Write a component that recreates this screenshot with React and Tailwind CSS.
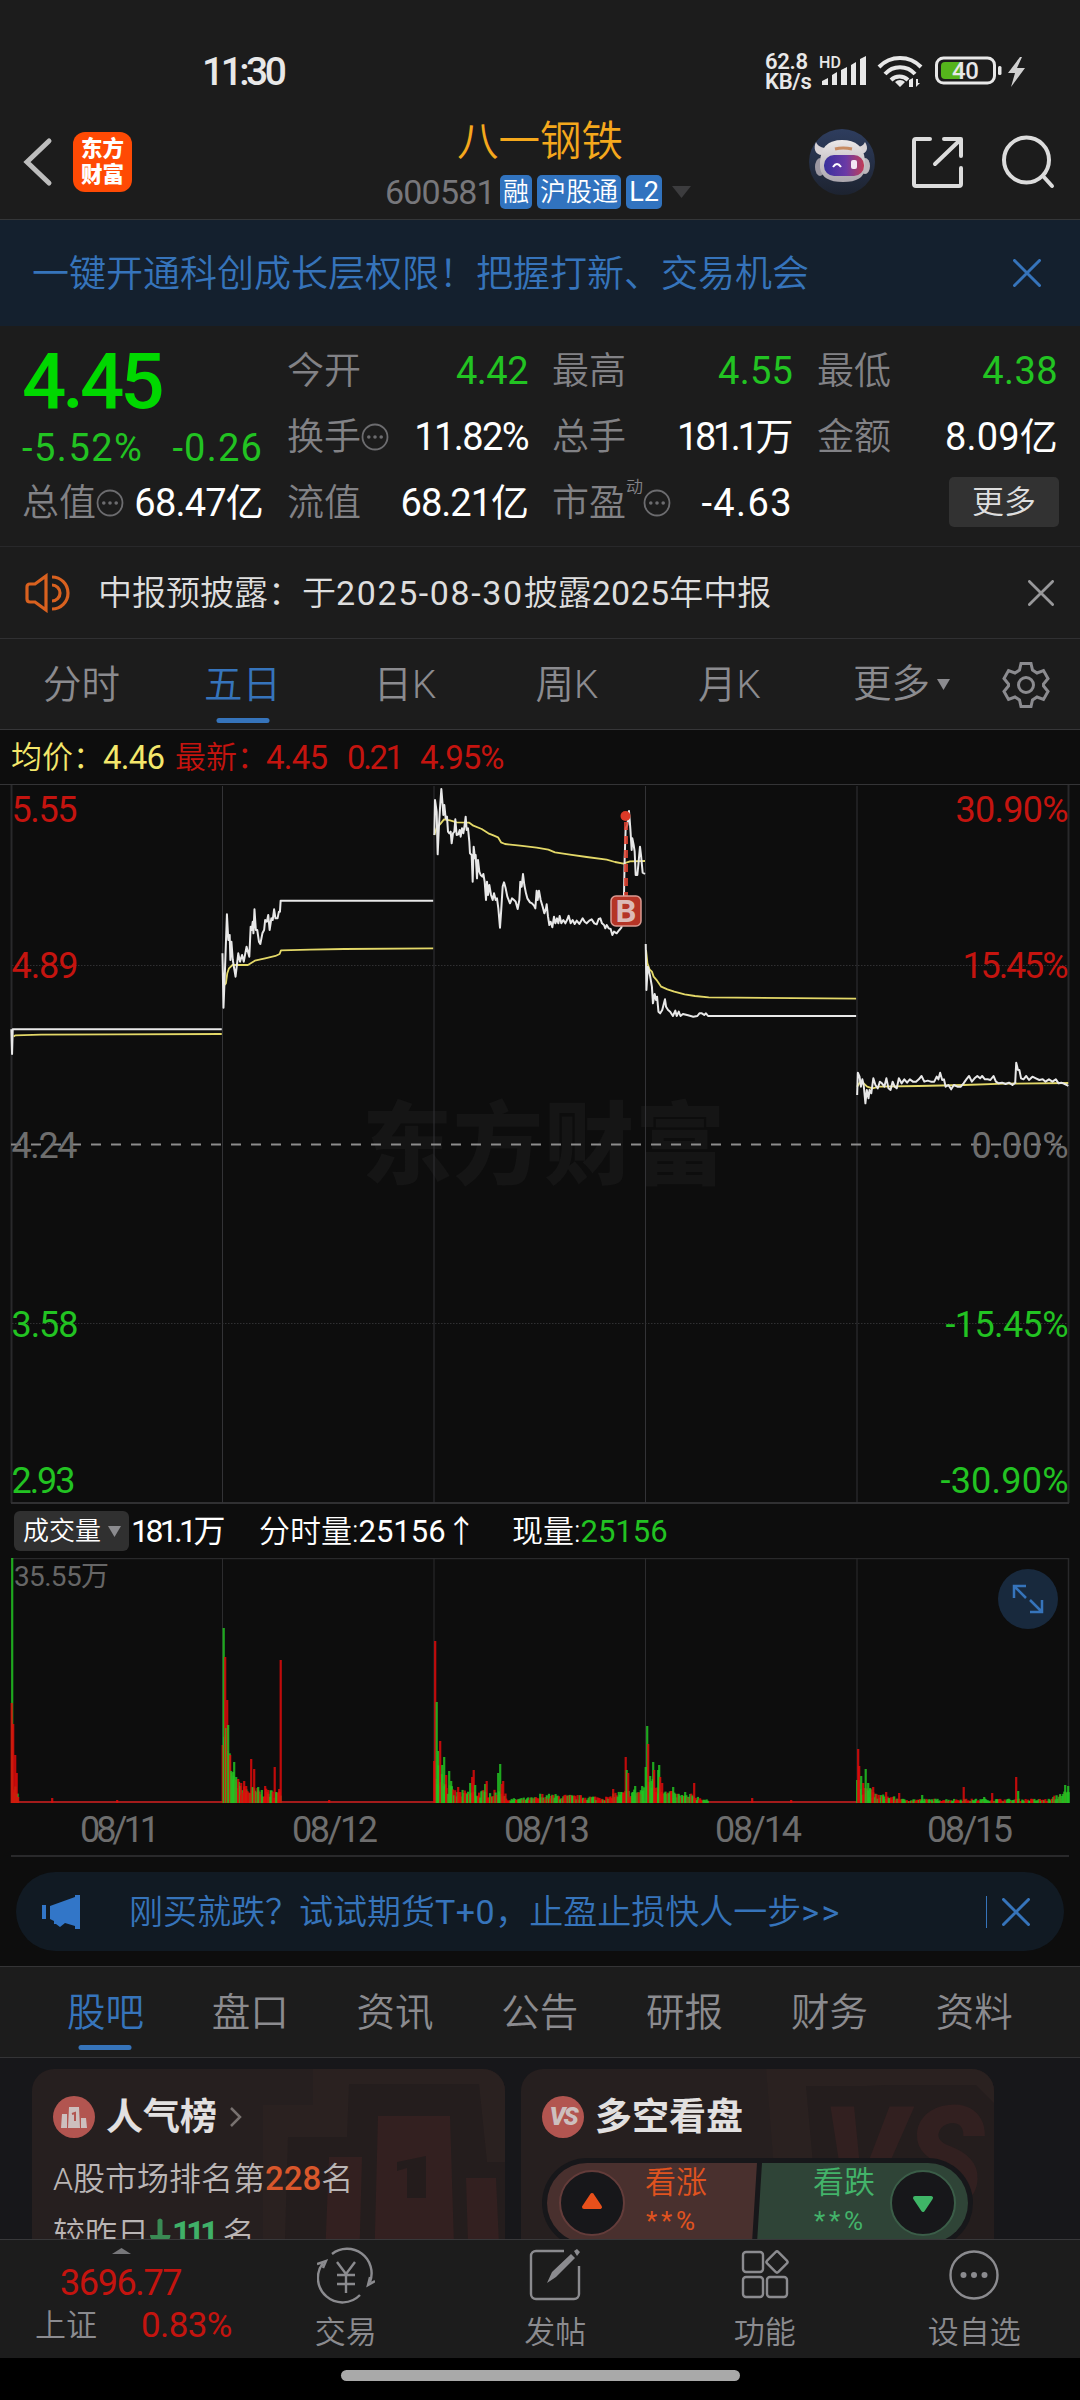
import React from "react";

const STATS = [
  [
    { label: "今开", value: "4.42", tone: "text-[#22c322]", tracking: "tracking-[-0.5px]" },
    { label: "换手", value: "11.82%", info: true, tracking: "tracking-[-1.6px]" },
    { label: "流值", value: "68.21亿", tracking: "tracking-[-1px]" },
  ],
  [
    { label: "最高", value: "4.55", tone: "text-[#22c322]", tracking: "tracking-[0.2px]" },
    { label: "总手", value: "181.1万", tracking: "tracking-[-3.4px] -mr-[-3px]" },
    { label: "市盈", value: "-4.63", sup: "动", info: true, tracking: "tracking-[1.4px]" },
  ],
  [
    { label: "最低", value: "4.38", tone: "text-[#22c322]", tracking: "tracking-[0.4px]" },
    { label: "金额", value: "8.09亿", tracking: "tracking-[0.2px]" },
    { button: "更多" },
  ],
];

const PERIODS = [
  { name: "分时", width: "w-[163px]" },
  { name: "五日", width: "w-[159px]", active: true },
  { name: "日K", width: "w-[166px]" },
  { name: "周K", width: "w-[158px]" },
  { name: "月K", width: "w-[167px]" },
];

const SECTIONS = ["股吧", "盘口", "资讯", "公告", "研报", "财务", "资料"];

const DAYS = [
  { label: "08/11", x: 80, width: 80 },
  { label: "08/12", x: 292, width: 86 },
  { label: "08/13", x: 504, width: 86 },
  { label: "08/14", x: 715, width: 87 },
  { label: "08/15", x: 927, width: 86 },
];

const GRID_X = [222.5, 434, 645.5, 857];

// price and average lines, one group per trading day
const PRICE_LINES = [
  {
    transform: "translate(0 640) scale(.34435 .33333)",
    price: "33,1168 35,1242 37,1168 644,1168",
    avg: "40,1190 44,1186 120,1184 340,1183 644,1182",
  },
  {
    transform: "translate(0 640) scale(.34435 .33333)",
    price:
      "646,940 649,1103 653,1000 659,823 663,900 667,885 669,960 672,905 676,960 684,1010 692,940 697,965 703,945 708,965 716,920 724,950 728,860 731,870 734,845 736,880 739,808 743,870 747,870 752,905 756,912 762,880 767,870 770,840 775,845 779,825 783,870 788,835 792,840 796,808 800,835 806,835 810,815 813,815 815,782 1258,782",
    avg: "652,1035 656,1030 660,1000 665,985 675,975 720,975 740,962 770,955 800,948 812,942 816,931 900,929 1000,927 1258,925",
  },
  {
    transform: "translate(420 775) scale(.33333 .33333)",
    price:
      "43,180 45,75 50,110 53,238 57,150 60,100 64,42 68,90 70,120 73,90 77,130 81,125 84,170 88,175 92,170 95,205 99,175 103,170 106,133 110,180 115,178 119,165 122,185 126,160 130,175 134,150 137,125 140,165 144,160 148,200 150,235 155,240 158,320 161,215 165,250 167,240 171,310 174,255 178,290 182,300 187,305 190,297 194,320 198,375 201,320 204,360 208,330 213,360 218,375 222,355 227,375 231,370 235,400 240,458 244,400 248,335 252,322 257,340 262,365 270,385 276,370 282,375 287,380 293,402 298,375 301,320 305,335 309,297 313,330 318,355 322,370 330,382 336,385 342,392 346,400 350,347 353,375 357,347 362,375 368,395 373,415 378,400 380,388 384,425 388,450 392,440 397,457 402,425 406,445 411,430 415,445 419,423 424,445 430,435 436,445 441,435 446,422 452,445 458,435 464,447 470,437 478,447 488,430 494,440 500,445 508,437 515,433 523,445 530,448 536,432 541,430 546,445 552,450 556,460 560,450 566,460 572,462 577,480 582,470 590,475 598,465 604,458 608,440 612,360 614,250 617,160 622,150 627,108 631,160 635,225 637,190 641,210 644,230 647,300 652,300 655,270 660,215 663,240 668,293 675,297",
    avg: "43,180 50,158 60,148 72,133 90,136 110,142 148,143 160,152 185,162 205,175 222,182 234,187 243,202 255,207 300,212 350,218 385,224 405,232 450,239 500,246 560,254 585,261 610,266 630,259 675,258",
  },
  {
    transform: "translate(540 640) scale(.34435 .33333)",
    price:
      "307,912 309,1050 313,980 316,990 320,1010 325,1040 328,1090 333,1062 337,1080 340,1070 344,1115 349,1120 355,1110 363,1078 366,1100 372,1110 378,1115 386,1128 393,1112 397,1128 403,1115 408,1128 415,1122 430,1126 445,1130 457,1128 463,1120 470,1120 477,1125 482,1120 488,1128 918,1128",
    avg: "308,930 312,970 318,988 325,995 330,1010 340,1022 352,1040 370,1048 390,1055 420,1063 450,1068 490,1072 918,1076",
  },
  {
    transform: "translate(540 640) scale(.34435 .33333)",
    price:
      "921,1365 923,1298 928,1310 932,1340 936,1318 940,1335 945,1390 949,1350 954,1375 957,1350 962,1360 968,1315 974,1335 981,1345 987,1325 993,1330 1000,1340 1006,1315 1012,1345 1018,1350 1024,1325 1030,1340 1036,1345 1042,1315 1050,1330 1058,1318 1066,1328 1074,1318 1083,1325 1092,1325 1100,1318 1108,1308 1116,1325 1126,1322 1135,1325 1145,1325 1152,1310 1157,1318 1162,1298 1168,1320 1173,1318 1178,1340 1186,1335 1194,1348 1202,1335 1212,1340 1222,1340 1230,1330 1238,1318 1246,1308 1254,1325 1262,1315 1270,1308 1278,1315 1284,1308 1292,1318 1300,1318 1308,1320 1317,1308 1324,1325 1332,1330 1342,1328 1352,1332 1362,1328 1372,1335 1380,1328 1383,1268 1388,1290 1392,1290 1397,1315 1404,1318 1412,1308 1420,1320 1430,1310 1440,1315 1450,1320 1460,1318 1468,1325 1478,1318 1488,1325 1498,1318 1506,1330 1514,1328 1524,1332 1530,1335 1534,1338",
    avg: "921,1340 930,1325 940,1330 950,1340 965,1345 985,1340 1100,1338 1230,1335 1350,1331 1534,1329",
  },
];

const AXIS_LABELS = [
  { y: 822, left: "5.55", lw: 66, right: "30.90%", rw: 113, fill: "#c4140f" },
  { y: 978, left: "4.89", lw: 67, right: "15.45%", rw: 106, fill: "#c4140f" },
  { y: 1158, left: "4.24", lw: 66, right: "0.00%", rw: 97, fill: "#6e6e6e" },
  { y: 1337, left: "3.58", lw: 67, right: "-15.45%", rw: 123, fill: "#22c322" },
  { y: 1493, left: "2.93", lw: 64, right: "-30.90%", rw: 128, fill: "#22c322" },
];

const RED = "#e00a0a";
const GREEN = "#22c322";

// [x, height, color]
const VOLUME_SPIKES = [
  [12, 245, GREEN], [11.5, 100, RED], [13, 79, RED], [15, 48, RED], [16.5, 30, RED], [18, 6, RED], [52, 5, RED], [117, 3, RED],
  [222.5, 58, RED], [223.5, 175, GREEN], [225, 146, RED], [226, 75, GREEN], [227, 103, RED], [228, 78, GREEN], [230, 48, RED], [231, 32, GREEN], [233, 31, GREEN], [234, 41, GREEN],
  [236, 26, GREEN], [238, 24, RED], [241, 20, RED], [244, 22, RED], [246, 17, RED], [251, 44, RED], [252.5, 16, GREEN], [254, 34, RED], [258, 16, GREEN],
  [265, 17, RED], [268, 13, RED], [274.5, 36, RED], [276, 11, GREEN], [279, 14, RED], [280.5, 143, RED], [329, 3, RED],
  [434, 42, RED], [435, 162, RED], [436.5, 101, GREEN], [438, 52, GREEN], [440, 62, RED], [442, 38, GREEN], [444, 46, GREEN], [446, 28, RED], [449, 32, GREEN], [451, 22, GREEN],
  [458, 16, RED], [470, 20, GREEN], [472, 26, RED], [473.5, 33, RED], [475, 18, GREEN], [485, 19, GREEN], [486.5, 22, RED], [498, 30, GREEN], [500, 39, GREEN], [501.5, 19, RED], [503, 22, RED],
  [613, 14, RED], [625.5, 46, RED], [626.5, 33, GREEN], [628, 30, RED], [635, 17, GREEN], [642, 17, GREEN],
  [645.5, 36, GREEN], [647, 77, GREEN], [648, 59, RED], [650, 27, GREEN], [651.5, 22, GREEN], [653, 41, GREEN], [654, 33, RED], [658, 33, GREEN], [659, 38, GREEN], [660, 26, RED],
  [662, 20, RED], [673, 16, GREEN], [685, 11, GREEN], [694, 20, RED], [752, 5, RED], [791, 3, RED],
  [857, 23, GREEN], [858, 54, RED], [859, 37, RED], [861, 27, GREEN], [863, 20, RED], [865.5, 34, GREEN], [868, 20, GREEN], [870, 15, GREEN], [873, 16, RED],
  [886, 11, RED], [899, 10, RED], [922, 8, GREEN], [963.5, 16, RED], [984, 6, GREEN], [992, 10, RED], [1016, 26, RED], [1018, 12, GREEN],
  [1060, 9, GREEN], [1065, 18, GREEN], [1068, 17, GREEN],
];

// [from, to, height at from, height at to]
const VOLUME_RANGES = [
  [13, 18, 26, 8],
  [224, 230, 75, 45],
  [230, 244, 30, 14],
  [244, 281, 16, 11],
  [436, 444, 50, 30],
  [444, 458, 22, 10],
  [458, 506, 12, 12],
  [506, 540, 4, 6],
  [540, 612, 9, 6],
  [612, 645, 10, 15],
  [647, 662, 27, 18],
  [662, 690, 13, 7],
  [690, 708, 9, 3],
  [859, 872, 21, 12],
  [872, 900, 10, 5],
  [900, 1052, 4, 4],
  [1052, 1069, 6, 13],
];

function buildVolume() {
  const bars = [];
  let seed = 7;
  const next = () => {
    seed = (seed * 16807) % 2147483647;
    return seed / 2147483647;
  };
  VOLUME_RANGES.forEach(([from, to, start, end]) => {
    for (let x = from; x < to; x += 1.1) {
      const top = start + ((end - start) * (x - from)) / (to - from);
      bars.push([x, top * (0.4 + next() * 0.7), next() > 0.5 ? GREEN : RED]);
    }
  });
  return bars.concat(VOLUME_SPIKES);
}

const VOLUME_BARS = buildVolume();

function InfoDots() {
  return (
    <svg className="h-[28px] w-[28px] shrink-0" viewBox="0 0 28 28" fill="#6c6c6f">
      <circle cx="14" cy="14" r="12.5" fill="none" stroke="#6c6c6f" strokeWidth="1.8" />
      <circle cx="7.8" cy="14" r="1.8" />
      <circle cx="14" cy="14" r="1.8" />
      <circle cx="20.2" cy="14" r="1.8" />
    </svg>
  );
}

function Close({ className }) {
  return (
    <svg className={className} viewBox="0 0 28 28" fill="none" stroke="currentColor" strokeWidth="3" strokeLinecap="round">
      <path d="M1.5 1.5 26.5 26.5M26.5 1.5 1.5 26.5" />
    </svg>
  );
}

function StatusBar() {
  return (
    <div className="flex h-[110px] items-start pl-[202px] pt-[50px] text-[#e8e8e8]">
      <span className="w-[563px] pt-[2px] text-[39px] font-medium leading-[40px] tracking-[-3.5px]">11:30</span>
      <div className="w-[54px] text-[22px] font-semibold leading-[20px]">
        <div className="pt-[2px] tracking-[-0.3px]">62.8</div>
        <div className="tracking-[-0.3px]">KB/s</div>
      </div>
      <svg className="h-[40px] w-[212px]" viewBox="819 50 212 40" fill="#e8e8e8">
        <text x="819" y="68" fontSize="16" fontWeight="500" textLength="22">HD</text>
        <path d="M822 81l6-3v7h-6zM832 75l5-3v13h-5zM841 70l6-3v18h-6zM851 65l5-3v23h-5zM860 59l6-3v29h-6z" />
        <g fill="none" stroke="#e8e8e8" strokeWidth="4">
          <path d="M879 67a29 29 0 0 1 42 0M885 74a20 20 0 0 1 30 0M891 80a12 12 0 0 1 17 0" />
        </g>
        <path d="M895 82a7 7 0 0 1 10 0l-5 5zM909 87v-7l4-2v9zM916 79v8l4-4h-2v-4z" />
        <rect x="936.5" y="58" width="58" height="25" rx="7" fill="none" stroke="#e8e8e8" strokeWidth="3" />
        <path d="M945 62h16v17h-16a4 4 0 0 1-4-4v-9a4 4 0 0 1 4-4z" fill="#55b41c" />
        <rect x="998" y="66" width="3.5" height="9" rx="1.5" />
        <text x="952" y="79" fontSize="24" fontWeight="500" textLength="27">40</text>
        <path d="M1020 57 1008 73h7l-4 14 14-19h-8l5-11z" fill="#d0d0d0" />
      </svg>
    </div>
  );
}

function Header() {
  return (
    <header className="flex h-[110px] border-b border-[#343638]">
      <div className="flex w-[385px] items-start pl-[23px] pt-[22px]">
        <svg className="mt-[5px] h-[50px] w-[30px]" viewBox="0 0 30 50" fill="none" stroke="#bdbdbd" strokeWidth="5" strokeLinecap="round">
          <path d="M26 4 4 25l22 21" />
        </svg>
        <div className="ml-[20px] flex h-[60px] w-[59px] flex-col items-center justify-center rounded-[12px] bg-[#ff4a04] text-[21.500px] font-black leading-[26px] text-white">
          <span>东方</span>
          <span>财富</span>
        </div>
      </div>
      <div className="w-[310px]">
        <div className="mt-[9px] text-center text-[41.500px] leading-[45px] text-[#f5a81c]">八一钢铁</div>
        <div className="mt-[9px] flex h-[38px] items-center gap-[5px] text-[27px] leading-none text-white">
          <span className="w-[110px] text-[34px] font-normal tracking-[-0.8px] text-[#77777b]">600581</span>
          <span className="flex h-[34px] w-[32px] items-center justify-center rounded-[5px] bg-[#3173bf] text-[26px]">融</span>
          <span className="flex h-[34px] w-[84px] items-center justify-center rounded-[5px] bg-[#3173bf] text-[26px]">沪股通</span>
          <span className="flex h-[34px] w-[36px] items-center justify-center rounded-[5px] bg-[#3173bf] font-normal">L2</span>
          <svg className="ml-[5px] h-[13px] w-[19px]" viewBox="0 0 19 13">
            <path d="M0 0h19l-9.500 12z" fill="#3c3c3e" />
          </svg>
        </div>
      </div>
      <svg className="ml-[105px] mt-[15px] h-[75px] w-[270px]" viewBox="800 125 270 75" fill="none">
        <defs>
          <linearGradient id="visor" x1="0" x2="1">
            <stop offset="0" stopColor="#38309c" />
            <stop offset=".55" stopColor="#6a3aa6" />
            <stop offset="1" stopColor="#c23d55" />
          </linearGradient>
          <linearGradient id="helmet" x1="0" x2="0" y1="0" y2="1">
            <stop offset="0" stopColor="#ece8e8" />
            <stop offset="1" stopColor="#aaa5ad" />
          </linearGradient>
          <linearGradient id="halo" x1="0" x2="0" y1="0" y2="1">
            <stop offset="0" stopColor="#2e3d5e" />
            <stop offset="1" stopColor="#1d2330" />
          </linearGradient>
        </defs>
        <circle cx="842" cy="162" r="33" fill="url(#halo)" />
        <path d="M816 142c-3 6-1 13 6 13l6-7c-7 0-10-2-12-6zM865 142c4 6 2 12-5 12l-6-7c7 0 9-1 11-5z" fill="#d8d3d6" />
        <ellipse cx="820" cy="167" rx="5" ry="9" fill="#9c98a2" />
        <ellipse cx="865" cy="166" rx="5" ry="8" fill="#bdb8bd" />
        <path d="M820 162q1-22 22-22t23 20v8q-1 14-22 14t-23-14z" fill="url(#helmet)" />
        <path d="M835 149q8-2 17 0" stroke="#c88b62" strokeWidth="3" />
        <rect x="824" y="155" width="40" height="21" rx="10" fill="url(#visor)" />
        <path d="M833 167q4-6 8 0" stroke="#fff" strokeWidth="2" />
        <rect x="851" y="160" width="6" height="9" rx="2" fill="#f3e6f5" />
        <g stroke="#dcdcdc" strokeWidth="4" strokeLinecap="round" strokeLinejoin="round">
          <path d="M930 139h-14q-2 0-2 2v43q0 2 2 2h43q2 0 2-2v-16M944 139h17v17M959 141l-24 23" />
          <circle cx="1026.500" cy="160" r="22.500" />
          <path d="m1043 176 9 10" />
        </g>
      </svg>
    </header>
  );
}

function Quote() {
  return (
    <section className="flex h-[221px] gap-[26px] border-b border-[#28282a] pl-[22px] pt-[12px] text-[37px] leading-none">
      <div className="w-[241px]">
        <div className="flex h-[88px] items-center text-[78px] font-medium tracking-[-4px] text-[#00d800]">4.45</div>
        <div className="flex h-[44px] items-center justify-between text-[38px] font-normal text-[#22c322]">
          <span className="tracking-[1.5px]">-5.52%</span>
          <span className="tracking-[1.2px]">-0.26</span>
        </div>
        <div className="flex h-[66px] items-center">
          <span className="text-[#828286]">总值</span>
          <InfoDots />
          <span className="ml-auto whitespace-nowrap text-[38px] font-normal tracking-[-0.8px] text-white">68.47亿</span>
        </div>
      </div>
      {STATS.map((column, i) => (
        <div key={i} className="-ml-[2px] w-[241px]">
          {column.map((item, j) =>
            item.button ? (
              <div key={j} className="flex h-[66px] items-center justify-end">
                <span className="-mr-px -mt-[2px] flex h-[50px] w-[110px] items-center justify-center rounded-[5px] bg-[#323232] text-[32px] text-[#dedede]">
                  {item.button}
                </span>
              </div>
            ) : (
              <div key={item.label} className="flex h-[66px] items-center">
                <span className="text-[#828286]">{item.label}</span>
                {item.sup && <span className="-mt-[32px] text-[17px] text-[#828286]">{item.sup}</span>}
                {item.info && <InfoDots />}
                <span className={`ml-auto whitespace-nowrap text-[38px] font-normal ${item.tracking} ${item.tone || "text-white"}`}>
                  {item.value}
                </span>
              </div>
            )
          )}
        </div>
      ))}
    </section>
  );
}

function PeriodTabs() {
  return (
    <nav className="flex h-[91px] border-b border-[#363638] text-[38.500px] leading-[92px] text-[#8b8b8f]">
      {PERIODS.map((tab) => (
        <div key={tab.name} className={`relative text-center ${tab.width} ${tab.active ? "text-[#3674bb]" : ""}`}>
          {tab.name}
          {tab.active && <span className="absolute bottom-[6px] left-1/2 h-[5px] w-[53px] -translate-x-1/2 rounded-full bg-[#3674bb]" />}
        </div>
      ))}
      <div className="ml-[40px] flex items-center gap-[7px]">
        更多
        <svg className="h-[11px] w-[13px]" viewBox="0 0 13 11">
          <path d="M0 0h13L6.500 11z" fill="#8b8b8f" />
        </svg>
      </div>
      <svg className="ml-[51px] mt-[21px] h-[50px] w-[50px]" viewBox="-25 -25 50 50" fill="none" stroke="#8b8b8f" strokeWidth="3">
        <path d="M-5-21.500H5L6.500-15 11-12 17.500-14.500 22-6.500 17.500-1V1L22 6.500 17.500 14.500 11 12 6.500 15 5 21.500H-5L-6.500 15-11 12-17.500 14.500-22 6.500-17.500 1V-1L-22-6.500-17.500-14.500-11-12-6.500-15Z" />
        <circle r="7.500" />
      </svg>
    </nav>
  );
}

function PriceChart() {
  return (
    <svg className="block h-[719px] w-[1080px]" viewBox="0 785 1080 719" fill="none">
      <g fontSize="90" fontWeight="900" fill="#151515">
        <text x="362" y="1177" textLength="363">东方财富</text>
      </g>
      <path d="M11.500 785V1503M1068.500 785V1503" stroke="#29292b" strokeWidth="2" />
      <path d="M11 1503H1069" stroke="#303032" strokeWidth="2" />
      {GRID_X.map((x) => (
        <path key={x} d={`M${x} 786V1503`} stroke="#333336" />
      ))}
      <path d="M12 965.500H1068M12 1323.500H1068" stroke="#303032" strokeDasharray="1.500 1.500" />
      <path d="M11 1144.500H1069" stroke="#8c8c8c" strokeWidth="2" strokeDasharray="10 10" />
      {PRICE_LINES.map((day, i) => (
        <g key={i} transform={day.transform} strokeLinejoin="round">
          <polyline points={day.avg} stroke="#e3d868" strokeWidth="1.8" vectorEffect="non-scaling-stroke" />
          <polyline points={day.price} stroke="#e8e8e8" strokeWidth="2" vectorEffect="non-scaling-stroke" />
        </g>
      ))}
      <path d="M626 822V898" stroke="#e04432" strokeOpacity=".85" strokeWidth="4" strokeDasharray="8 6" />
      <circle cx="625.500" cy="816" r="5" fill="#dd3a28" />
      <rect x="611" y="896" width="30" height="30" rx="5" fill="#b53426" stroke="#d99a92" strokeWidth="1.500" />
      <text x="615.500" y="922" fontSize="31" fontWeight="700" textLength="21" lengthAdjust="spacingAndGlyphs" fill="#dcbab7">B</text>
      {AXIS_LABELS.map((label) => (
        <g key={label.left} fontSize="36" fontWeight="400" fill={label.fill}>
          <text x="11.500" y={label.y} textLength={label.lw}>{label.left}</text>
          <text x={1068.5 - label.rw} y={label.y} textLength={label.rw}>{label.right}</text>
        </g>
      ))}
    </svg>
  );
}

function VolumeChart() {
  return (
    <div className="relative h-[299px]">
      <svg className="block h-[299px] w-[1080px]" viewBox="0 1558 1080 299">
        <path d="M11 1558.500H1069M1068.500 1558V1803" stroke="#29292b" strokeWidth="1.500" />
        {GRID_X.map((x) => (
          <path key={x} d={`M${x} 1558V1803`} stroke="#2c2c2e" />
        ))}
        <text x="14" y="1586" fontSize="28" fontWeight="400" fill="#666666" textLength="95">35.55万</text>
        <path d="M12 1802H1069" stroke="#a31b1b" strokeWidth="2" />
        {VOLUME_BARS.map(([x, height, color], i) => (
          <rect key={i} x={x - 0.9} y={1803 - height} width="2.200" height={height} fill={color} fillOpacity=".85" />
        ))}
        {DAYS.map((day) => (
          <text key={day.label} x={day.x} y="1842" fontSize="36" fontWeight="400" fill="#6e6e6e" textLength={day.width}>
            {day.label}
          </text>
        ))}
        <path d="M11 1856H1069" stroke="#29292b" strokeWidth="2" />
      </svg>
      <span className="absolute right-[22px] top-[11px] flex h-[60px] w-[60px] items-center justify-center rounded-full bg-[#18293d]">
        <svg className="h-[32px] w-[32px]" viewBox="0 0 32 32" fill="none" stroke="#3674bb" strokeWidth="2.500">
          <path d="M2 15V3h12M3 4l11 11M30 17v12H18M29 28 18 17" />
        </svg>
      </span>
    </div>
  );
}

function Promo() {
  return (
    <div className="mx-[16px] mt-[15px] flex h-[79px] items-center rounded-full bg-[#111a23] pl-[25px] text-[34px] leading-none text-[#3674bb]">
      <svg className="h-[36px] w-[41px]" viewBox="0 0 41 36" fill="#3276c8">
        <path d="M1 11h4v14H1zM9 12 34 3V1h5v34h-5v-3l-10-3-5 4-4-3h-2v-3l-4-2z" />
      </svg>
      <span className="ml-[47px] whitespace-nowrap">
        刚买就跌？试试期货<span className="font-normal tracking-[0.5px]">T+0</span>，止盈止损快人一步
        <span className="font-normal tracking-[2.5px]">&gt;&gt;</span>
      </span>
      <span className="ml-auto h-[32px] w-px bg-[#3674bb]" />
      <Close className="ml-[15px] mr-[34px] h-[28px] w-[28px]" />
    </div>
  );
}

function SectionTabs() {
  return (
    <nav className="mt-[15px] flex h-[92px] border-y border-[#343436] bg-[#1c1c1c] pl-[33px] text-[38.500px] leading-[91px] text-[#8b8b8f]">
      {SECTIONS.map((name, i) => (
        <div key={name} className={`relative w-[144.800px] text-center ${i === 0 ? "text-[#3674bb]" : ""}`}>
          {name}
          {i === 0 && <span className="absolute bottom-[7px] left-1/2 h-[5px] w-[53px] -translate-x-1/2 rounded-full bg-[#3674bb]" />}
        </div>
      ))}
    </nav>
  );
}

function RankCard() {
  return (
    <div className="relative h-[240px] w-[473px] overflow-hidden rounded-[22px] bg-[#261f1f] pl-[21px] pt-[26px]">
      <svg className="absolute right-0 top-0 h-[240px] w-[242px]" viewBox="0 0 242 240">
        <path d="M0 36h50V0h192v240H0z" fill="#2a2120" />
        <path d="M20 240 25 68h59L86 15h130l8 78h18v147z" fill="#241d1d" />
        <path d="M60 240 66 88h33l-4 152zM110 240l5-193h72l6 193zM203 109h30l6 131h-32z" fill="#332020" />
        <path d="m134 93 29-6v42h-19v-30l-10 3z" fill="#241c1c" />
      </svg>
      <div className="relative flex items-center">
        <svg className="h-[42px] w-[42px]" viewBox="0 0 42 42">
          <circle cx="21" cy="21" r="21" fill="#b25550" />
          <path d="M9 18h5v14H8zM16 11h10l1 21H15zM28 22h5l1 10h-6z" fill="#cdbfbe" />
          <path d="m19 18 3-1v8" fill="none" stroke="#b25550" strokeWidth="2" />
        </svg>
        <span className="ml-[11px] mt-[2px] text-[37px] font-bold leading-[42px] text-[#e2e0e0]">人气榜</span>
        <svg className="ml-[12px] h-[22px] w-[13px]" viewBox="0 0 13 22" fill="none" stroke="#77716f" strokeWidth="2.500">
          <path d="m2 2 9 9-9 9" />
        </svg>
      </div>
      <div className="relative mt-[20px] whitespace-nowrap text-[32px] leading-[40px] text-[#bab5b5]">
        A股市场排名第<span className="text-[33px] font-medium text-[#d9572b]">228</span>名
      </div>
      <div className="relative mt-[15px] flex items-center whitespace-nowrap text-[32px] leading-[40px] text-[#bab5b5]">
        较昨日
        <svg className="mt-[2px] h-[34px] w-[22px]" viewBox="0 0 22 34" fill="#3a8a54">
          <path d="M8.500 2q2.500-3 5 0v15h8q0 5-5 7H6q-5-2-5-7h7.500z" />
        </svg>
        <span className="ml-[1px] mr-[9px] text-[33px] font-bold tracking-[-5px] text-[#40b068]">111</span>
        <span>名</span>
      </div>
    </div>
  );
}

function SentimentCard() {
  return (
    <div className="relative h-[240px] w-[473px] overflow-hidden rounded-[22px] bg-[#261f1f] pl-[21px] pt-[26px]">
      <svg className="absolute left-0 top-0 h-[240px] w-[473px]" viewBox="521 2069 473 240">
        <path d="M766 2069H994V2309H785z" fill="#2a2120" />
        <path d="M806 2086h60l20-1h90l18 18v206H826z" fill="#241d1d" />
        <text x="822" y="2208" fontSize="142" fontWeight="900" fontStyle="italic" fill="#322020" textLength="162" lengthAdjust="spacingAndGlyphs">VS</text>
        <rect x="542" y="2158" width="431" height="90" rx="45" fill="#17171a" />
        <path d="M587 2163H757L752 2243H587A40 40 0 0 1 587 2163z" fill="#49302e" />
        <path d="M762 2163H928A40 40 0 0 1 928 2243H757z" fill="#2f4437" />
        <circle cx="592" cy="2203" r="32" fill="#17171a" stroke="#633c3a" strokeWidth="2" />
        <circle cx="923" cy="2203" r="32" fill="#17171a" stroke="#3b5d48" strokeWidth="2" />
        <path d="m592 2195 8 12h-16z" fill="#e8501b" stroke="#e8501b" strokeWidth="4" strokeLinejoin="round" />
        <path d="m923 2210 8-12h-16z" fill="#3fb567" stroke="#3fb567" strokeWidth="4" strokeLinejoin="round" />
        <g fontSize="31" fill="#e0531f">
          <text x="645" y="2193">看涨</text>
          <text x="646" y="2230" fontSize="26" fontWeight="400" textLength="49">**%</text>
        </g>
        <g fontSize="31" fill="#43b36a">
          <text x="813" y="2193">看跌</text>
          <text x="814" y="2230" fontSize="26" fontWeight="400" textLength="49">**%</text>
        </g>
      </svg>
      <div className="relative flex items-center">
        <span className="flex h-[42px] w-[42px] items-center justify-center rounded-full bg-[#b25550] text-[25px] font-black italic tracking-[-2px] text-[#cdbfbe]">VS</span>
        <span className="ml-[11px] mt-[2px] text-[37px] font-bold leading-[42px] text-[#e2e0e0]">多空看盘</span>
      </div>
    </div>
  );
}

const NAV_ITEMS = [
  {
    label: "交易",
    icon: (
      <>
        <path d="M15 8A24.500 24.500 0 0 1 53 36M6 17A24.500 24.500 0 0 0 43 49M0 18l9-3-3 7M58 35l-7 4 2-8" />
        <path d="m20 16 9 12 9-12M29 28v19M20 29h18M20 38h18" />
      </>
    ),
  },
  {
    label: "发帖",
    icon: (
      <>
        <path d="M38 5H10a5 5 0 0 0-5 5v38a5 5 0 0 0 5 5h38a5 5 0 0 0 5-5V20" />
        <path d="M21 37 26 26 45 8l4 4-19 19zM48 5l3-2 3 3-3 4z" fill="#8b8b8f" strokeWidth="0" />
      </>
    ),
  },
  {
    label: "功能",
    icon: (
      <>
        <rect x="7" y="6" width="20" height="20" rx="3" />
        <rect x="7" y="31" width="20" height="20" rx="3" />
        <rect x="31" y="31" width="20" height="20" rx="3" />
        <rect x="33" y="8" width="16" height="16" rx="2" transform="rotate(45 41 16)" />
      </>
    ),
  },
  {
    label: "设自选",
    icon: (
      <>
        <circle cx="29" cy="29" r="23.500" />
        <g fill="#8b8b8f" strokeWidth="0">
          <circle cx="18.500" cy="29" r="3" />
          <circle cx="29" cy="29" r="3" />
          <circle cx="39.500" cy="29" r="3" />
        </g>
      </>
    ),
  },
];

function BottomNav() {
  return (
    <footer className="h-[161px] shrink-0 bg-black">
      <div className="flex h-[119px] border-t border-[#38383a] bg-[#1c1c1c]">
        <div className="w-[241px] leading-none">
          <svg className="ml-[112px] mt-[8px] h-[6px] w-[19px]" viewBox="0 0 19 6">
            <path d="M0 6 9.500 0 19 6z" fill="#77777a" />
          </svg>
          <div className="mt-[11px] pl-[60px] text-[36px] font-normal tracking-[-1.4px] text-[#c4140f]">3696.77</div>
          <div className="mt-[7px] flex items-center pl-[35px] text-[31px] text-[#8b8b8f]">
            上证
            <span className="ml-[44px] text-[35px] font-normal tracking-[-0.6px] text-[#c4140f]">0.83%</span>
          </div>
        </div>
        {NAV_ITEMS.map((item) => (
          <div key={item.label} className="flex w-[209.500px] flex-col items-center pt-[6px]">
            <svg className="h-[58px] w-[58px]" viewBox="0 0 58 58" fill="none" stroke="#8b8b8f" strokeWidth="2.400">
              {item.icon}
            </svg>
            <span className="mt-[13px] text-[31px] leading-[32px] text-[#8b8b8f]">{item.label}</span>
          </div>
        ))}
      </div>
      <div className="mx-auto mt-[12px] h-[11px] w-[399px] rounded-full bg-[#a9a9a9]" />
    </footer>
  );
}

export default function App() {
  return (
    <div className="flex h-[2400px] w-[1080px] flex-col overflow-hidden bg-[#1c1c1c] font-[Roboto,'Noto_Sans_CJK_SC',sans-serif] font-[350]">
      <StatusBar />
      <Header />
      <div className="flex h-[106px] items-center justify-between bg-[#14202e] pl-[32px] pr-[39px] text-[37px] leading-none text-[#3674bb]">
        <span className="whitespace-nowrap pt-[2px]">一键开通科创成长层权限！把握打新、交易机会</span>
        <Close className="h-[28px] w-[28px]" />
      </div>
      <Quote />
      <div className="flex h-[92px] items-center border-b border-[#303032] pl-[25px] pr-[26px] text-[34px] leading-none text-[#dedede]">
        <svg className="h-[40px] w-[46px]" viewBox="0 0 46 40" fill="none" stroke="#d9611f" strokeWidth="3.200">
          <path d="M21 3v34l-11-8H5q-3 0-3-3V14q0-3 3-3h5zM27 4a16 16 0 0 1 0 32M27 12a8 8 0 0 1 0 16" />
        </svg>
        <span className="ml-[27px] whitespace-nowrap">
          中报预披露：于<span className="font-normal tracking-[1.600px]">2025-08-30</span>披露
          <span className="font-normal tracking-[0.3px]">2025</span>年中报
        </span>
        <Close className="ml-auto h-[26px] w-[26px] text-[#98989a]" />
      </div>
      <PeriodTabs />
      <main className="h-[1509px] shrink-0 bg-[#0d0d0d]">
        <div className="flex h-[55px] items-center whitespace-nowrap border-b border-[#343436] pl-[11px] text-[31px] leading-none text-[#c4140f]">
          <span className="w-[92px] text-[#f4e76b]">均价：</span>
          <span className="w-[72px] text-[33px] font-normal tracking-[-0.8px] text-[#f4e76b]">4.46</span>
          <span className="w-[91px]">最新：</span>
          <span className="w-[81px] text-[33px] font-normal tracking-[-0.8px]">4.45</span>
          <span className="w-[73px] text-[33px] font-normal tracking-[-2.400px]">0.21</span>
          <span className="text-[33px] font-normal tracking-[-1px]">4.95%</span>
        </div>
        <PriceChart />
        <div className="flex h-[54px] items-center whitespace-nowrap pl-[14px] text-[31px] leading-none text-white">
          <span className="flex h-[40px] w-[115px] items-center rounded-[6px] bg-[#303030] pl-[9px] text-[26px]">
            成交量
            <svg className="ml-[7px] h-[11px] w-[13px]" viewBox="0 0 13 11">
              <path d="M0 0h13L6.500 11z" fill="#8b8b8f" />
            </svg>
          </span>
          <span className="w-[130px] pl-[2px] text-[32px] font-normal tracking-[-3.6px]">181.1万</span>
          <span className="w-[253px]">
            分时量:<span className="font-normal">25156</span>↑
          </span>
          <span>现量:</span>
          <span className="font-normal text-[#22c322]">25156</span>
        </div>
        <VolumeChart />
        <Promo />
        <SectionTabs />
        <div className="flex h-[181px] gap-[16px] overflow-hidden bg-[#17171a] pl-[32px] pt-[11px]">
          <RankCard />
          <SentimentCard />
        </div>
      </main>
      <BottomNav />
    </div>
  );
}
